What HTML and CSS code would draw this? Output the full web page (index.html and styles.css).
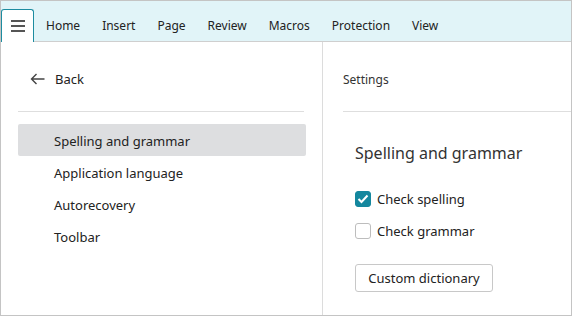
FILE: index.html
```html
<!DOCTYPE html>
<html lang="en">
<head>
	<meta charset="UTF-8">
	<title>Settings</title>
	<link rel="stylesheet" href="styles.css">
</head>
<body>
	<div class="window">
		<div class="ribbon">
			<div class="menu-btn">
				<svg width="14" height="12" viewBox="0 0 14 12"><path d="M0 1h14M0 6h14M0 11h14" stroke="#555" stroke-width="2"/></svg>
			</div>
			<ul class="tabs">
				<li>Home</li>
				<li>Insert</li>
				<li>Page</li>
				<li>Review</li>
				<li>Macros</li>
				<li>Protection</li>
				<li>View</li>
			</ul>
		</div>
		<div class="main">
			<div class="sidebar">
				<div class="back">
					<svg width="15" height="12" viewBox="0 0 15 12"><path d="M14.5 6H1.5M6.5 1L1.5 6l5 5" fill="none" stroke="#444" stroke-width="1.4"/></svg>
					<span>Back</span>
				</div>
				<div class="divider short"></div>
				<ul class="nav">
					<li class="active">Spelling and grammar</li>
					<li>Application language</li>
					<li>Autorecovery</li>
					<li>Toolbar</li>
				</ul>
			</div>
			<div class="content">
				<div class="title">Settings</div>
				<div class="divider"></div>
				<div class="section">
					<h2>Spelling and grammar</h2>
					<label class="check">
						<span class="box checked">
							<svg width="12" height="10" viewBox="0 0 12 10"><path d="M1.5 5l3 3 6-6.5" fill="none" stroke="#fff" stroke-width="2"/></svg>
						</span>
						Check spelling
					</label>
					<label class="check">
						<span class="box"></span>
						Check grammar
					</label>
					<button class="btn">Custom dictionary</button>
				</div>
			</div>
		</div>
	</div>
</body>
</html>
```

FILE: styles.css
```css
* {margin: 0;padding: 0;box-sizing: border-box;}
ul {list-style: none;}
body {background: #fff;font-family: "Noto Sans", "Open Sans", sans-serif;color: #222;}
.window {display: flex;flex-direction: column;width: 572px;height: 316px;border: 1px solid #c4c4c4;overflow: hidden;}
.ribbon {display: flex;align-items: flex-end;height: 41px;background: #e1f4f8;border-bottom: 1px solid #cfcfcf;flex-shrink: 0;}
.menu-btn {display: flex;align-items: center;justify-content: center;width: 33px;height: 33px;margin-bottom: -1px;background: #fff;border: 1px solid #1d8ca0;border-bottom: none;border-radius: 3px 3px 0 0;}
.tabs {display: flex;height: 32px;align-items: center;margin-left: 1px;}
.tabs li {padding: 0 11px;font-size: 12px;color: #222;}
.main {display: flex;flex: 1;}
.sidebar {width: 322px;padding: 21px 0 0 17px;border-right: 1px solid #dcdcdc;flex-shrink: 0;}
.back {display: flex;align-items: center;height: 32px;padding-left: 12px;font-size: 13px;}
.back svg {margin-right: 10px;}
.divider {height: 1px;background: #dedede;margin-top: 16px;}
.divider.short {margin-right: 18px;}
.nav {margin-top: 12px;width: 288px;}
.nav li {height: 32px;line-height: 34px;padding-left: 36px;font-size: 13px;border-radius: 2px;}
.nav li.active {background: #dddee0;}
.content {flex: 1;padding-top: 21px;}
.title {height: 32px;line-height: 34px;padding-left: 20px;font-size: 12px;color: #333;}
.content .divider {margin-left: 20px;}
.section {display: flex;flex-direction: column;align-items: flex-start;padding: 29px 0 0 32px;}
.section h2 {font-size: 16px;font-weight: normal;line-height: 24px;color: #333;}
.check {display: flex;align-items: center;height: 24px;font-size: 13px;margin-top: 8px;}
.section h2 + .check {margin-top: 22px;}
.box {display: flex;align-items: center;justify-content: center;width: 16px;height: 16px;margin-right: 6px;border: 1px solid #bdbdbd;border-radius: 3px;background: #fff;}
.box.checked {background: #14879e;border-color: #14879e;}
.btn {margin-top: 21px;width: 138px;height: 28px;font-family: inherit;font-size: 13px;color: #222;background: #fff;border: 1px solid #c8c8c8;border-radius: 3px;}
```
